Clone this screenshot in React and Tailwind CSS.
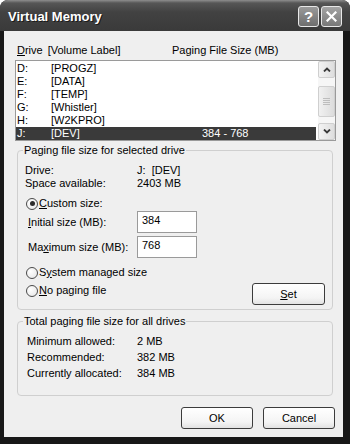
import React from "react";

// rows of the drive list
const drives = [
  { letter: "D:", label: "[PROGZ]", size: "" },
  { letter: "E:", label: "[DATA]", size: "" },
  { letter: "F:", label: "[TEMP]", size: "" },
  { letter: "G:", label: "[Whistler]", size: "" },
  { letter: "H:", label: "[W2KPRO]", size: "" },
  { letter: "J:", label: "[DEV]", size: "384 - 768", selected: true },
];

function Radio({ checked }) {
  return (
    <span className="w-[12px] h-[12px] rounded-full border border-[#4a4a4a] bg-[radial-gradient(circle_at_35%_35%,#ffffff,#e4e4e4)] flex items-center justify-center shrink-0">
      {checked && <span className="w-[5px] h-[5px] rounded-full bg-[#2c2c2c]" />}
    </span>
  );
}

function Button({ children, className = "" }) {
  return (
    <button
      className={
        "h-[22px] w-[72px] rounded-[3px] border border-[#3c3c3c] bg-[linear-gradient(to_bottom,#ffffff,#f4f4f4_70%,#e2e2e2)] text-[11px] leading-[13px] text-black " +
        className
      }
    >
      {children}
    </button>
  );
}

function ScrollArrow({ up }) {
  return (
    <div className="h-[17px] rounded-[2px] border border-[#cfcfcf] bg-[linear-gradient(to_right,#f3f3f3,#dedede)] flex items-center justify-center">
      <svg width="8" height="5" viewBox="0 0 8 5">
        <polyline
          points={up ? "1,4.5 4,1.5 7,4.5" : "1,0.5 4,3.5 7,0.5"}
          fill="none"
          stroke="#3a3a3a"
          strokeWidth="1.8"
        />
      </svg>
    </div>
  );
}

export default function App() {
  return (
    <div className="w-[350px] h-[444px] bg-white [font-family:'Liberation_Sans',Arial,sans-serif] text-[11px] leading-[13px] text-black">
      <div className="h-full flex flex-col rounded-t-[8px] bg-[#181818] overflow-hidden">
        {/* title bar */}
        <div className="h-[31px] shrink-0 flex items-center pl-[8px] pr-[8px] bg-[linear-gradient(to_bottom,#8e8e8e_0px,#565656_3px,#424242_12px,#3a3a3a_100%)]">
          <span className="flex-1 text-white font-bold text-[13px] leading-[16px] mt-[2px] [text-shadow:1px_1px_#1a1a1a]">
            Virtual Memory
          </span>
          <div className="flex gap-[2px] mt-[2px]">
            <div className="w-[21px] h-[21px] rounded-[3px] border border-[#e8e8e8] bg-[linear-gradient(to_bottom,#9a9a9a,#6e6e6e)] flex items-center justify-center text-white font-bold text-[15px] leading-none">
              ?
            </div>
            <div className="w-[21px] h-[21px] rounded-[3px] border border-[#e8e8e8] bg-[linear-gradient(to_bottom,#a4a4a4,#787878)] flex items-center justify-center">
              <svg width="11" height="11" viewBox="0 0 11 11">
                <path d="M1.5 1.5 L9.5 9.5 M9.5 1.5 L1.5 9.5" stroke="#fff" strokeWidth="2.2" strokeLinecap="square" />
              </svg>
            </div>
          </div>
        </div>

        {/* dialog body */}
        <div className="flex-1 flex pl-[4px] pr-[7px] pb-[7px]">
          <div className="flex-1 bg-[#efefef] flex flex-col pl-[11px] pr-[7px]">
            {/* list header */}
            <div className="flex mt-[13px] pl-[2px]">
              <span className="w-[155px]">
                <u>D</u>rive<span className="ml-[5px]">[Volume Label]</span>
              </span>
              <span>Paging File Size (MB)</span>
            </div>

            {/* drive list */}
            <div className="mt-[3px] h-[81px] border border-[#9a9a9a] bg-white flex">
              <div className="flex-1 pt-[1px] pr-[2px]">
                {drives.map((d) => (
                  <div
                    key={d.letter}
                    className={
                      "h-[13px] flex pl-[1px] " +
                      (d.selected ? "bg-[#3a3a3a] text-white" : "")
                    }
                  >
                    <span className="w-[34px]">{d.letter}</span>
                    <span className="w-[151px]">{d.label}</span>
                    <span>{d.size}</span>
                  </div>
                ))}
              </div>
              <div className="w-[17px] bg-[#f6f6f6] flex flex-col">
                <ScrollArrow up />
                <div className="mt-[8px] h-[31px] rounded-[2px] border border-[#cfcfcf] bg-[linear-gradient(to_right,#f1f1f1,#dcdcdc)] flex flex-col items-center justify-center gap-[1px]">
                  <span className="w-[7px] h-px bg-[#bdbdbd]" />
                  <span className="w-[7px] h-px bg-[#bdbdbd]" />
                  <span className="w-[7px] h-px bg-[#bdbdbd]" />
                  <span className="w-[7px] h-px bg-[#bdbdbd]" />
                </div>
                <div className="flex-1" />
                <ScrollArrow />
              </div>
            </div>

            {/* selected drive group */}
            <fieldset className="mt-[3px] ml-[2px] mr-[3px] border border-[#cfcfcf] rounded-[4px] pl-[7px] pr-[7px] pb-[4px]">
              <legend className="-ml-[2px] px-[1px]">Paging file size for selected drive</legend>
              <div className="mt-[7px] flex">
                <span className="w-[112px]">Drive:</span>
                <span>J:&nbsp;&nbsp;[DEV]</span>
              </div>
              <div className="flex">
                <span className="w-[112px]">Space available:</span>
                <span>2403 MB</span>
              </div>
              <div className="mt-[7px] ml-[1px] flex items-center gap-[1px]">
                <Radio checked />
                <span>
                  <u>C</u>ustom size:
                </span>
              </div>
              <div className="mt-[1px] ml-[3px] flex items-center">
                <span className="w-[109px]">
                  <u>I</u>nitial size (MB):
                </span>
                <div className="w-[60px] h-[22px] border border-[#9a9a9a] bg-white pl-[4px] pt-[2px]">384</div>
              </div>
              <div className="mt-[3px] ml-[3px] flex items-center">
                <span className="w-[109px]">
                  Ma<u>x</u>imum size (MB):
                </span>
                <div className="w-[60px] h-[22px] border border-[#9a9a9a] bg-white pl-[4px] pt-[2px]">768</div>
              </div>
              <div className="mt-[8px] ml-[1px] flex items-center gap-[1px]">
                <Radio />
                <span>
                  S<u>y</u>stem managed size
                </span>
              </div>
              <div className="mt-[4px] ml-[1px] flex items-start">
                <div className="mt-[1px] flex items-center gap-[1px]">
                  <Radio />
                  <span>
                    <u>N</u>o paging file
                  </span>
                </div>
                <Button className="ml-auto w-[73px]">
                  <u>S</u>et
                </Button>
              </div>
            </fieldset>

            {/* totals group */}
            <fieldset className="mt-[5px] ml-[2px] mr-[3px] border border-[#cfcfcf] rounded-[4px] pl-[9px] pb-[15px]">
              <legend className="-ml-[4px] px-[1px]">Total paging file size for all drives</legend>
              <div className="mt-[7px] flex">
                <span className="w-[110px]">Minimum allowed:</span>
                <span>2 MB</span>
              </div>
              <div className="mt-[3px] flex">
                <span className="w-[110px]">Recommended:</span>
                <span>382 MB</span>
              </div>
              <div className="mt-[3px] flex">
                <span className="w-[110px]">Currently allocated:</span>
                <span>384 MB</span>
              </div>
            </fieldset>

            {/* dialog buttons */}
            <div className="mt-[11px] mr-[1px] flex justify-end gap-[10px]">
              <Button>OK</Button>
              <Button>Cancel</Button>
            </div>
          </div>
        </div>
      </div>
    </div>
  );
}
